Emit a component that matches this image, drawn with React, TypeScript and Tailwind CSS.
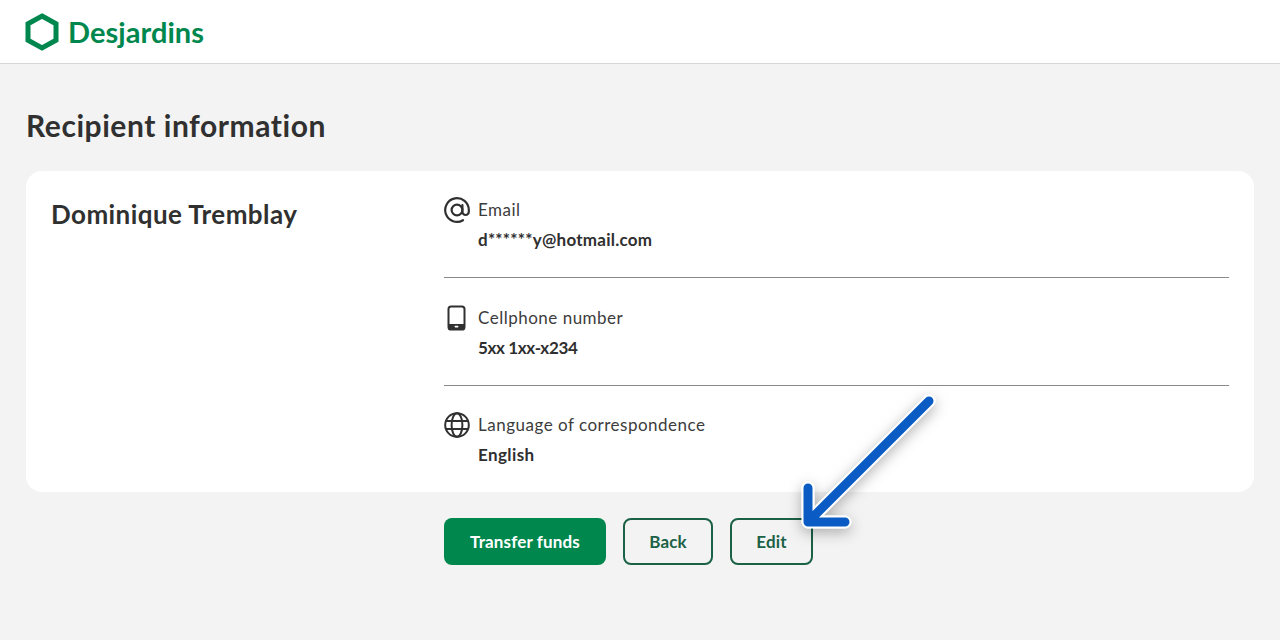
const font = "[font-family:Lato,'Open_Sans',sans-serif]";

function Row({ icon, label, value, valueClass, last }: { icon: React.ReactNode; label: string; value: string; valueClass: string; last?: boolean }) {
  return (
    <div className={last ? "" : "border-b border-[#8a8a8a] pb-[27px] mb-[25px]"}>
      <div className="flex items-center h-[30px]">
        <div className="w-[34px] shrink-0">{icon}</div>
        <span className="text-[17px] leading-[30px] text-[#3c3c3c] tracking-[0.5px]">{label}</span>
      </div>
      <div className={`pl-[34px] mt-[5px] h-[20px] text-[17px] leading-[20px] font-bold text-[#2f2f2f] ${valueClass}`}>{value}</div>
    </div>
  );
}

const At = (
  <svg width="26" height="26" viewBox="0 0 26 26" fill="none" stroke="#303030" strokeWidth="2.2" strokeLinecap="round">
    <circle cx="13" cy="13" r="5.4" />
    <path d="M18.4 8v6.8a3.2 3.2 0 0 0 6.4 0V13A11.8 11.8 0 1 0 19 23.2" />
  </svg>
);
const Phone = (
  <svg width="26" height="26" viewBox="0 0 26 26" fill="none">
    <rect x="4.5" y="1.5" width="16" height="23" rx="2.6" stroke="#303030" strokeWidth="2" />
    <rect x="4.5" y="19" width="16" height="5.5" fill="#303030" />
    <rect x="10.5" y="20.8" width="4" height="1.6" rx="0.8" fill="#fff" />
  </svg>
);
const Globe = (
  <svg width="26" height="26" viewBox="0 0 26 26" fill="none" stroke="#303030" strokeWidth="2">
    <circle cx="13" cy="13" r="11.8" />
    <ellipse cx="13" cy="13" rx="5.4" ry="11.8" />
    <path d="M2 9h22M2 17h22" />
  </svg>
);

export default function App() {
  return (
    <div className={`relative w-[1280px] h-[640px] overflow-hidden bg-[#f3f3f3] ${font}`}>
      <header className="h-[64px] bg-white border-b border-[#d6d6d6] flex items-center pl-[25px]">
        <svg width="34" height="38" viewBox="0 0 34 38" fill="none" className="mr-[9px]">
          <path d="M17 3 31 10.8v16.4L17 35 3 27.2V10.8Z" stroke="#00874e" strokeWidth="5" />
        </svg>
        <span className="text-[29px] leading-none font-bold text-[#00874e] tracking-[0.05px]">Desjardins</span>
      </header>

      <main className="px-[26px]">
        <h1 className="mt-[43px] h-[37px] text-[30px] leading-[37px] font-bold text-[#303030] tracking-[0.55px]">
          Recipient information
        </h1>
        <section className="mt-[27px] h-[321px] rounded-[16px] bg-white flex pl-[25px] pr-[25px] pt-[24px]">
          <h2 className="w-[393px] shrink-0 text-[26px] leading-[40px] h-[40px] mt-[-1px] font-bold text-[#303030] tracking-[0.42px]">
            Dominique Tremblay
          </h2>
          <div className="flex-1">
            <Row icon={At} label="Email" value="d******y@hotmail.com" valueClass="tracking-[0.25px]" />
            <Row icon={Phone} label="Cellphone number" value="5xx 1xx-x234" valueClass="tracking-[-0.35px]" />
            <div className="-mt-px">
              <Row icon={Globe} label="Language of correspondence" value="English" valueClass="tracking-[0.4px]" last />
            </div>
          </div>
        </section>
        <div className="mt-[26px] ml-[418px] flex gap-[17px] text-[17px] font-bold tracking-[0.15px]">
          <button className="w-[162px] h-[47px] rounded-[8px] bg-[#00874e] text-white">Transfer funds</button>
          <button className="w-[90px] h-[47px] rounded-[8px] border-2 border-[#1a6146] text-[#1a6146]">Back</button>
          <button className="w-[83px] h-[47px] rounded-[8px] border-2 border-[#1a6146] text-[#1a6146]">Edit</button>
        </div>
      </main>

      <svg className="absolute left-0 top-0 pointer-events-none" width="1280" height="640" viewBox="0 0 1280 640" fill="none">
        <defs>
          <filter id="s" x="-30%" y="-30%" width="160%" height="160%">
            <feDropShadow dx="0" dy="4" stdDeviation="7" floodColor="#000" floodOpacity="0.3" />
          </filter>
        </defs>
        <g strokeLinecap="round" strokeLinejoin="round">
          <path d="M929 401 809 521M808 488v34h37" stroke="#fff" strokeWidth="13" filter="url(#s)" />
          <path d="M929 401 809 521M808 488v34h37" stroke="#0a5cc4" strokeWidth="9" />
        </g>
      </svg>
    </div>
  );
}
